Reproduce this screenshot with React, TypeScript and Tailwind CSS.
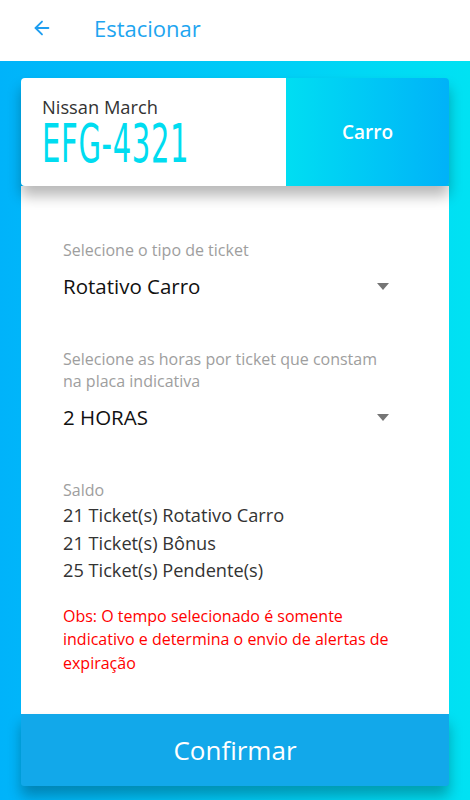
import { ArrowLeft } from "lucide-react"

const saldo = [
  "21 Ticket(s) Rotativo Carro",
  "21 Ticket(s) Bônus",
  "25 Ticket(s) Pendente(s)",
]

function Caret() {
  return (
    <svg width="12" height="7" viewBox="0 0 12 7" className="shrink-0">
      <path d="M0 0h12L6 7z" fill="#757575" />
    </svg>
  )
}

function Field({ label, value }: { label: React.ReactNode; value: string }) {
  return (
    <div className="flex flex-col">
      <div className="text-[16px] leading-[22px] text-[#9e9e9e]">{label}</div>
      <div className="mt-[12px] flex items-center justify-between">
        <span className="text-[20.5px] leading-[26px] text-[#111]">{value}</span>
        <Caret />
      </div>
    </div>
  )
}

export default function App() {
  return (
    <div className="w-[470px] h-[800px] overflow-hidden flex flex-col font-['Open_Sans',sans-serif]">
      <header className="h-[61px] shrink-0 bg-white flex items-center pl-[31px] pb-[5px]">
        <ArrowLeft size={22} strokeWidth={2} color="#1e9ef0" />
        <h1 className="ml-[41px] text-[22px] text-[#1ea5f0] leading-none">Estacionar</h1>
      </header>

      <main className="flex-1 bg-gradient-to-r from-[#00b3fa] to-[#00e2f3] px-[21px] pt-[17px]">
        <div className="relative z-10 h-[108px] flex rounded-[4px] overflow-hidden shadow-[0_10px_14px_rgba(0,0,0,0.28)]">
          <div className="w-[265px] bg-white pl-[21px] pt-[19px]">
            <div className="text-[18.3px] leading-[20px] text-[#333]">Nissan March</div>
            <div className="origin-left scale-x-[0.6] whitespace-nowrap font-['DejaVu_Sans_Condensed','DejaVu_Sans',sans-serif] text-[54px] leading-[54px] text-[#00dcf0] tracking-[1px]">
              EFG-4321
            </div>
          </div>
          <div className="flex-1 bg-gradient-to-r from-[#00def2] to-[#00b2f8] flex items-center justify-center">
            <span className="text-[19px] font-semibold text-white">Carro</span>
          </div>
        </div>

        <div className="bg-white pl-[42px] pr-[60px] pt-[53px] pb-[39px] flex flex-col">
          <Field label="Selecione o tipo de ticket" value="Rotativo Carro" />
          <div className="mt-[49px]">
            <Field
              label={
                <>
                  Selecione as horas por ticket que constam
                  <br />
                  na placa indicativa
                </>
              }
              value="2 HORAS"
            />
          </div>
          <div className="mt-[50px] text-[16px] leading-[20px] text-[#9e9e9e]">Saldo</div>
          <div className="mt-[2px] flex flex-col text-[18.2px] leading-[27.5px] text-[#333]">
            {saldo.map((s) => (
              <span key={s}>{s}</span>
            ))}
          </div>
          <p className="mt-[20px] text-[16px] leading-[23.5px] text-[#f00]">
            Obs: O tempo selecionado é somente indicativo e determina o envio de alertas de expiração
          </p>
        </div>

        <button className="w-full h-[72px] bg-[#12a8ea] text-white text-[26px] rounded-b-[3px] shadow-[0_10px_14px_rgba(0,0,0,0.28)]">
          Confirmar
        </button>
      </main>
    </div>
  )
}
